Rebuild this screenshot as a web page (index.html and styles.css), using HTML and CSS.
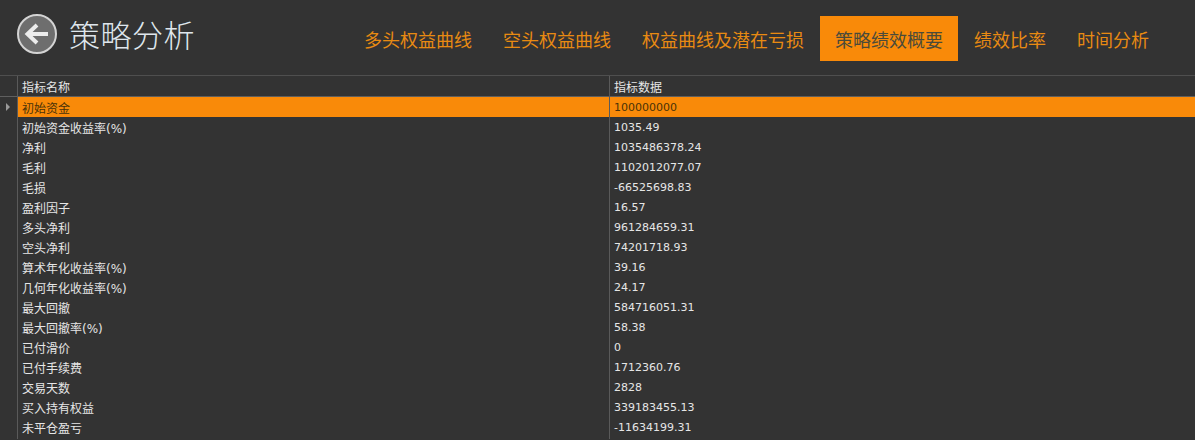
FILE: index.html
```html
<!DOCTYPE html>
<html lang="zh-CN">
<head>
<meta charset="utf-8">
<title>策略分析</title>
<link rel="stylesheet" href="styles.css">
</head>
<body>
<header class="top">
  <div class="brand">
    <svg class="back" width="40" height="40" viewBox="0 0 40 40">
      <circle cx="20" cy="20" r="19" fill="#6e6e6e" stroke="#d4d4d4" stroke-width="2"/>
      <path d="M31 20H11M20 11L10.500 20L20 29" fill="none" stroke="#ececec" stroke-width="4"/>
    </svg>
    <h1 class="title">策略分析</h1>
  </div>
  <nav class="tabs">
    <a class="tab">多头权益曲线</a>
    <a class="tab">空头权益曲线</a>
    <a class="tab">权益曲线及潜在亏损</a>
    <a class="tab active">策略绩效概要</a>
    <a class="tab">绩效比率</a>
    <a class="tab">时间分析</a>
  </nav>
</header>
<div class="grid">
  <div class="row head"><div class="mark"></div><div class="name">指标名称</div><div class="val cjk">指标数据</div></div>
  <div class="row sel"><div class="mark"><span class="arrow"></span></div><div class="name">初始资金</div><div class="val">100000000</div></div>
  <div class="row"><div class="mark"></div><div class="name">初始资金收益率<span class="latin">(%)</span></div><div class="val">1035.49</div></div>
  <div class="row"><div class="mark"></div><div class="name">净利</div><div class="val">1035486378.24</div></div>
  <div class="row"><div class="mark"></div><div class="name">毛利</div><div class="val">1102012077.07</div></div>
  <div class="row"><div class="mark"></div><div class="name">毛损</div><div class="val">-66525698.83</div></div>
  <div class="row"><div class="mark"></div><div class="name">盈利因子</div><div class="val">16.57</div></div>
  <div class="row"><div class="mark"></div><div class="name">多头净利</div><div class="val">961284659.31</div></div>
  <div class="row"><div class="mark"></div><div class="name">空头净利</div><div class="val">74201718.93</div></div>
  <div class="row"><div class="mark"></div><div class="name">算术年化收益率<span class="latin">(%)</span></div><div class="val">39.16</div></div>
  <div class="row"><div class="mark"></div><div class="name">几何年化收益率<span class="latin">(%)</span></div><div class="val">24.17</div></div>
  <div class="row"><div class="mark"></div><div class="name">最大回撤</div><div class="val">584716051.31</div></div>
  <div class="row"><div class="mark"></div><div class="name">最大回撤率<span class="latin">(%)</span></div><div class="val">58.38</div></div>
  <div class="row"><div class="mark"></div><div class="name">已付滑价</div><div class="val">0</div></div>
  <div class="row"><div class="mark"></div><div class="name">已付手续费</div><div class="val">1712360.76</div></div>
  <div class="row"><div class="mark"></div><div class="name">交易天数</div><div class="val">2828</div></div>
  <div class="row"><div class="mark"></div><div class="name">买入持有权益</div><div class="val">339183455.13</div></div>
  <div class="row"><div class="mark"></div><div class="name">未平仓盈亏</div><div class="val">-11634199.31</div></div>
</div>
</body>
</html>
```
FILE: styles.css
```css
* { box-sizing: border-box; }
html, body { margin: 0; height: 100%; overflow: hidden; }
body {
  background: #333333;
  color: #e6e6e6;
  font-family: "Noto Sans CJK SC", sans-serif;
  font-size: 12px;
}
.top {
  height: 75px;
  display: flex;
  justify-content: space-between;
  align-items: flex-start;
}
.brand {
  display: flex;
  align-items: center;
  gap: 12px;
  padding: 14px 0 0 17px;
}
.back { display: block; }
.title {
  margin: 0;
  font-size: 31px;
  font-weight: 300;
  line-height: 40px;
  letter-spacing: 0.5px;
  color: #dfe6ec;
}
.tabs {
  display: flex;
  padding: 16px 30.5px 0 0;
}
.tab {
  height: 45px;
  line-height: 46px;
  font-size: 18px;
  color: #e88a12;
  padding: 0 15.5px;
  white-space: nowrap;
}
.tab.active {
  background: #f98a09;
  color: #4a4a3a;
  padding: 0 15px;
  margin: 0 0.5px;
}
.grid { border-top: 1px solid #4f4f4f; }
.row {
  display: grid;
  grid-template-columns: 17px 592px 1fr;
  height: 20px;
  line-height: 22px;
}
.row > div { white-space: nowrap; }
.row > .mark { border-right: 1px solid #5a5a5a; position: relative; width: 18px; }
.row > .name { padding-left: 4px; margin-left: 1px; }
.row > .val {
  border-left: 1px solid #5a5a5a;
  padding-left: 4px;
  font-family: "DejaVu Sans", sans-serif;
  font-size: 11px;
}
.row > .val.cjk { font-family: "Noto Sans CJK SC", sans-serif; font-size: 12px; }
.latin { font-family: "DejaVu Sans", sans-serif; font-size: 12px; }
.head { height: 21px; border-bottom: 1px solid #5f5f5f; line-height: 21px; }
.sel { background: #f98a09; color: #4a3208; }
.sel .mark { background: #333333; }
.arrow {
  position: absolute;
  left: 6px;
  top: 6px;
  border-left: 4px solid #9a9a9a;
  border-top: 4px solid transparent;
  border-bottom: 4px solid transparent;
}
```
